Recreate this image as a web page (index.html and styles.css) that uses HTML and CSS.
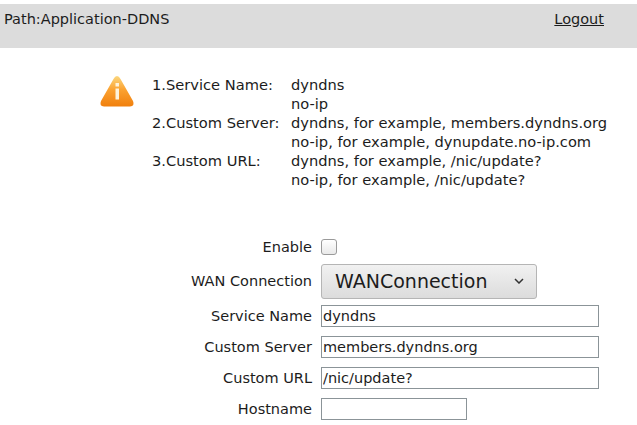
FILE: index.html
```html
<!DOCTYPE html>
<html lang="en">
<head>
  <meta charset="UTF-8">
  <title>Application - DDNS</title>
  <link rel="stylesheet" href="styles.css">
</head>
<body>

  <div class="path-bar">
    <span>Path:Application-DDNS</span>
    <a class="logout" href="#">Logout</a>
  </div>

  <!-- Help text -->
  <div class="help">
    <svg class="help-icon" width="36" height="36" viewBox="0 0 36 36">
      <defs>
        <linearGradient id="warnFill" x1="0" y1="0" x2="0" y2="1">
          <stop offset="0" stop-color="#fbd77e"/>
          <stop offset="0.45" stop-color="#fba231"/>
          <stop offset="1" stop-color="#f07f0d"/>
        </linearGradient>
      </defs>
      <path d="M18 2 Q20 2 21.500 5 L34 27 Q36 32 31 32.500 L5 32.500 Q0 32 2 27 L14.500 5 Q16 2 18 2 Z" fill="url(#warnFill)"/>
      <rect x="16.500" y="9" width="3.500" height="3.500" fill="#fdf3dc"/>
      <rect x="16.500" y="14.500" width="3.500" height="11" fill="#fdf3dc"/>
    </svg>
    <div class="help-grid">
      <div>1.Service Name:</div>
      <div>dyndns<br>no-ip</div>
      <div>2.Custom Server:</div>
      <div>dyndns, for example, members.dyndns.org<br>no-ip, for example, dynupdate.no-ip.com</div>
      <div>3.Custom URL:</div>
      <div>dyndns, for example, /nic/update?<br>no-ip, for example, /nic/update?</div>
    </div>
  </div>

  <!-- DDNS form -->
  <div class="form">
    <div class="row row-enable">
      <label for="enable">Enable</label>
      <input type="checkbox" id="enable" class="check">
    </div>
    <div class="row row-wan">
      <label for="wan">WAN Connection</label>
      <select id="wan" class="wan-select">
        <option>WANConnection</option>
      </select>
    </div>
    <div class="row">
      <label for="service">Service Name</label>
      <input type="text" id="service" class="text-input" value="dyndns">
    </div>
    <div class="row">
      <label for="server">Custom Server</label>
      <input type="text" id="server" class="text-input" value="members.dyndns.org">
    </div>
    <div class="row">
      <label for="url">Custom URL</label>
      <input type="text" id="url" class="text-input" value="/nic/update?">
    </div>
    <div class="row">
      <label for="hostname">Hostname</label>
      <input type="text" id="hostname" class="text-input short">
    </div>
  </div>

</body>
</html>
```

FILE: styles.css
```css
html { overflow: hidden; }
body {
  margin: 0;
  padding-top: 4px;
  font-family: "DejaVu Sans", sans-serif;
  font-size: 14.5px;
  color: #1c1c1c;
  background: #fff;
}
.path-bar {
  display: flex;
  justify-content: space-between;
  height: 44px;
  padding: 7px 33px 0 4px;
  box-sizing: border-box;
  background: #dcdcdc;
}
.logout { color: #1c1c1c; text-decoration: underline; }
.help {
  display: flex;
  margin-top: 26px;
  padding-left: 99px;
}
.help-icon { flex: none; margin-right: 17px; }
.help-grid {
  display: grid;
  grid-template-columns: 139px auto;
  row-gap: 1px;
  font-size: 14.65px;
  line-height: 18.5px;
  padding-top: 2px;
}
.form { margin-top: 42px; }
.row {
  display: flex;
  align-items: center;
  height: 31px;
}
.row label {
  width: 312px;
  text-align: right;
  margin-right: 9px;
}
.row-wan { height: 38px; }
.check {
  appearance: none;
  width: 16px;
  height: 16px;
  margin: 0;
  border: 1px solid #9a9a9a;
  border-radius: 3px;
  background: linear-gradient(#fff, #e9e9e9);
}
.wan-select {
  appearance: none;
  width: 216px;
  height: 35px;
  padding: 0 0 0 13px;
  border: 1px solid #b5b5b5;
  border-radius: 3px;
  font-family: "DejaVu Sans", sans-serif;
  font-size: 19px;
  color: #1c1c1c;
  background-color: #e6e6e6;
  background-image: url("data:image/svg+xml,%3Csvg xmlns='http://www.w3.org/2000/svg' width='10' height='6'%3E%3Cpath d='M1 1l4 4 4-4' fill='none' stroke='%23333' stroke-width='1.500'/%3E%3C/svg%3E"), linear-gradient(#f1f1f1, #dcdcdc);
  background-repeat: no-repeat, repeat;
  background-position: right 12px center, 0 0;
}
.text-input {
  width: 278px;
  height: 22px;
  padding: 0 1px;
  box-sizing: border-box;
  border: 1px solid #8b9498;
  font-family: "DejaVu Sans", sans-serif;
  font-size: 14.5px;
  color: #1c1c1c;
  background: #fff;
  outline: none;
}
.short { width: 146px; }
```
